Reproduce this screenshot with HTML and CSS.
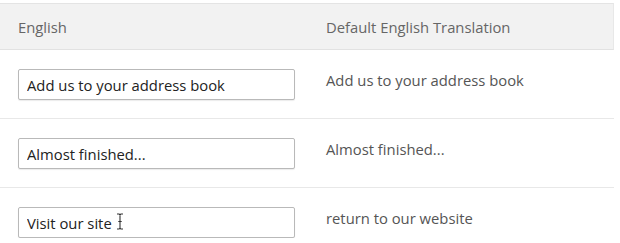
FILE: index.html
```html
<!DOCTYPE html>
<html>
<head>
<meta charset="utf-8">
<link rel="stylesheet" href="styles.css">
</head>
<body>
<div class="table">
  <div class="head">
    <div class="col-a">English</div>
    <div class="col-b">Default English Translation</div>
  </div>
  <div class="row">
    <div class="col-a"><input class="field" type="text" value="Add us to your address book"></div>
    <div class="col-b">Add us to your address book</div>
  </div>
  <div class="row">
    <div class="col-a"><input class="field" type="text" value="Almost finished..."></div>
    <div class="col-b">Almost finished...</div>
  </div>
  <div class="row">
    <div class="col-a field-wrap"><input class="field" type="text" value="Visit our site">
      <svg class="ibeam" width="8" height="17" viewBox="0 0 8 17"><path d="M1 1h2.2l0.8 0.8 0.8-0.8H7M4 1.8v13.4M1 16h2.2l0.8-0.8 0.8 0.8H7M2.3 8.5h3.4" fill="none" stroke="#333" stroke-width="1.1"/></svg>
    </div>
    <div class="col-b">return to our website</div>
  </div>
</div>
</body>
</html>
```
FILE: styles.css
```css
html, body {
  margin: 0;
  padding: 0;
  background: #fff;
}
body {
  padding-top: 3px;
  font-family: "Open Sans", "Liberation Sans", sans-serif;
  font-size: 14.8px;
}
.table {
  width: 614px;
}
.head {
  display: grid;
  grid-template-columns: 308px 1fr;
  align-items: center;
  height: 45px;
  background: #f2f2f2;
  border-top: 1px solid #e4e4e4;
  border-right: 1px solid #e8e8e8;
  border-bottom: 1px solid #e2e2e2;
  color: #666;
}
.head .col-a {
  padding-left: 18px;
}
.head .col-b {
  padding-left: 18px;
}
.row {
  display: grid;
  grid-template-columns: 308px 1fr;
  align-items: start;
  height: 49px;
  padding-top: 19px;
  border-bottom: 1px solid #e8e8e8;
}
.row:last-child {
  border-bottom: none;
  height: auto;
}
.row .col-a {
  padding-left: 18px;
}
.row .col-b {
  padding-left: 18px;
  line-height: 22px;
  color: #555;
}
.field {
  box-sizing: border-box;
  display: block;
  width: 277px;
  height: 31px;
  margin: 0;
  padding: 0 8px;
  border: 1px solid #b9b9b9;
  border-radius: 2px;
  box-shadow: 0 1px 1px rgba(0,0,0,0.08);
  font-family: "Open Sans", "Liberation Sans", sans-serif;
  font-size: 14.8px;
  color: #222;
  background: #fff;
  outline: none;
}
.field-wrap {
  position: relative;
}
.ibeam {
  position: absolute;
  left: 116px;
  top: 6px;
}
```
